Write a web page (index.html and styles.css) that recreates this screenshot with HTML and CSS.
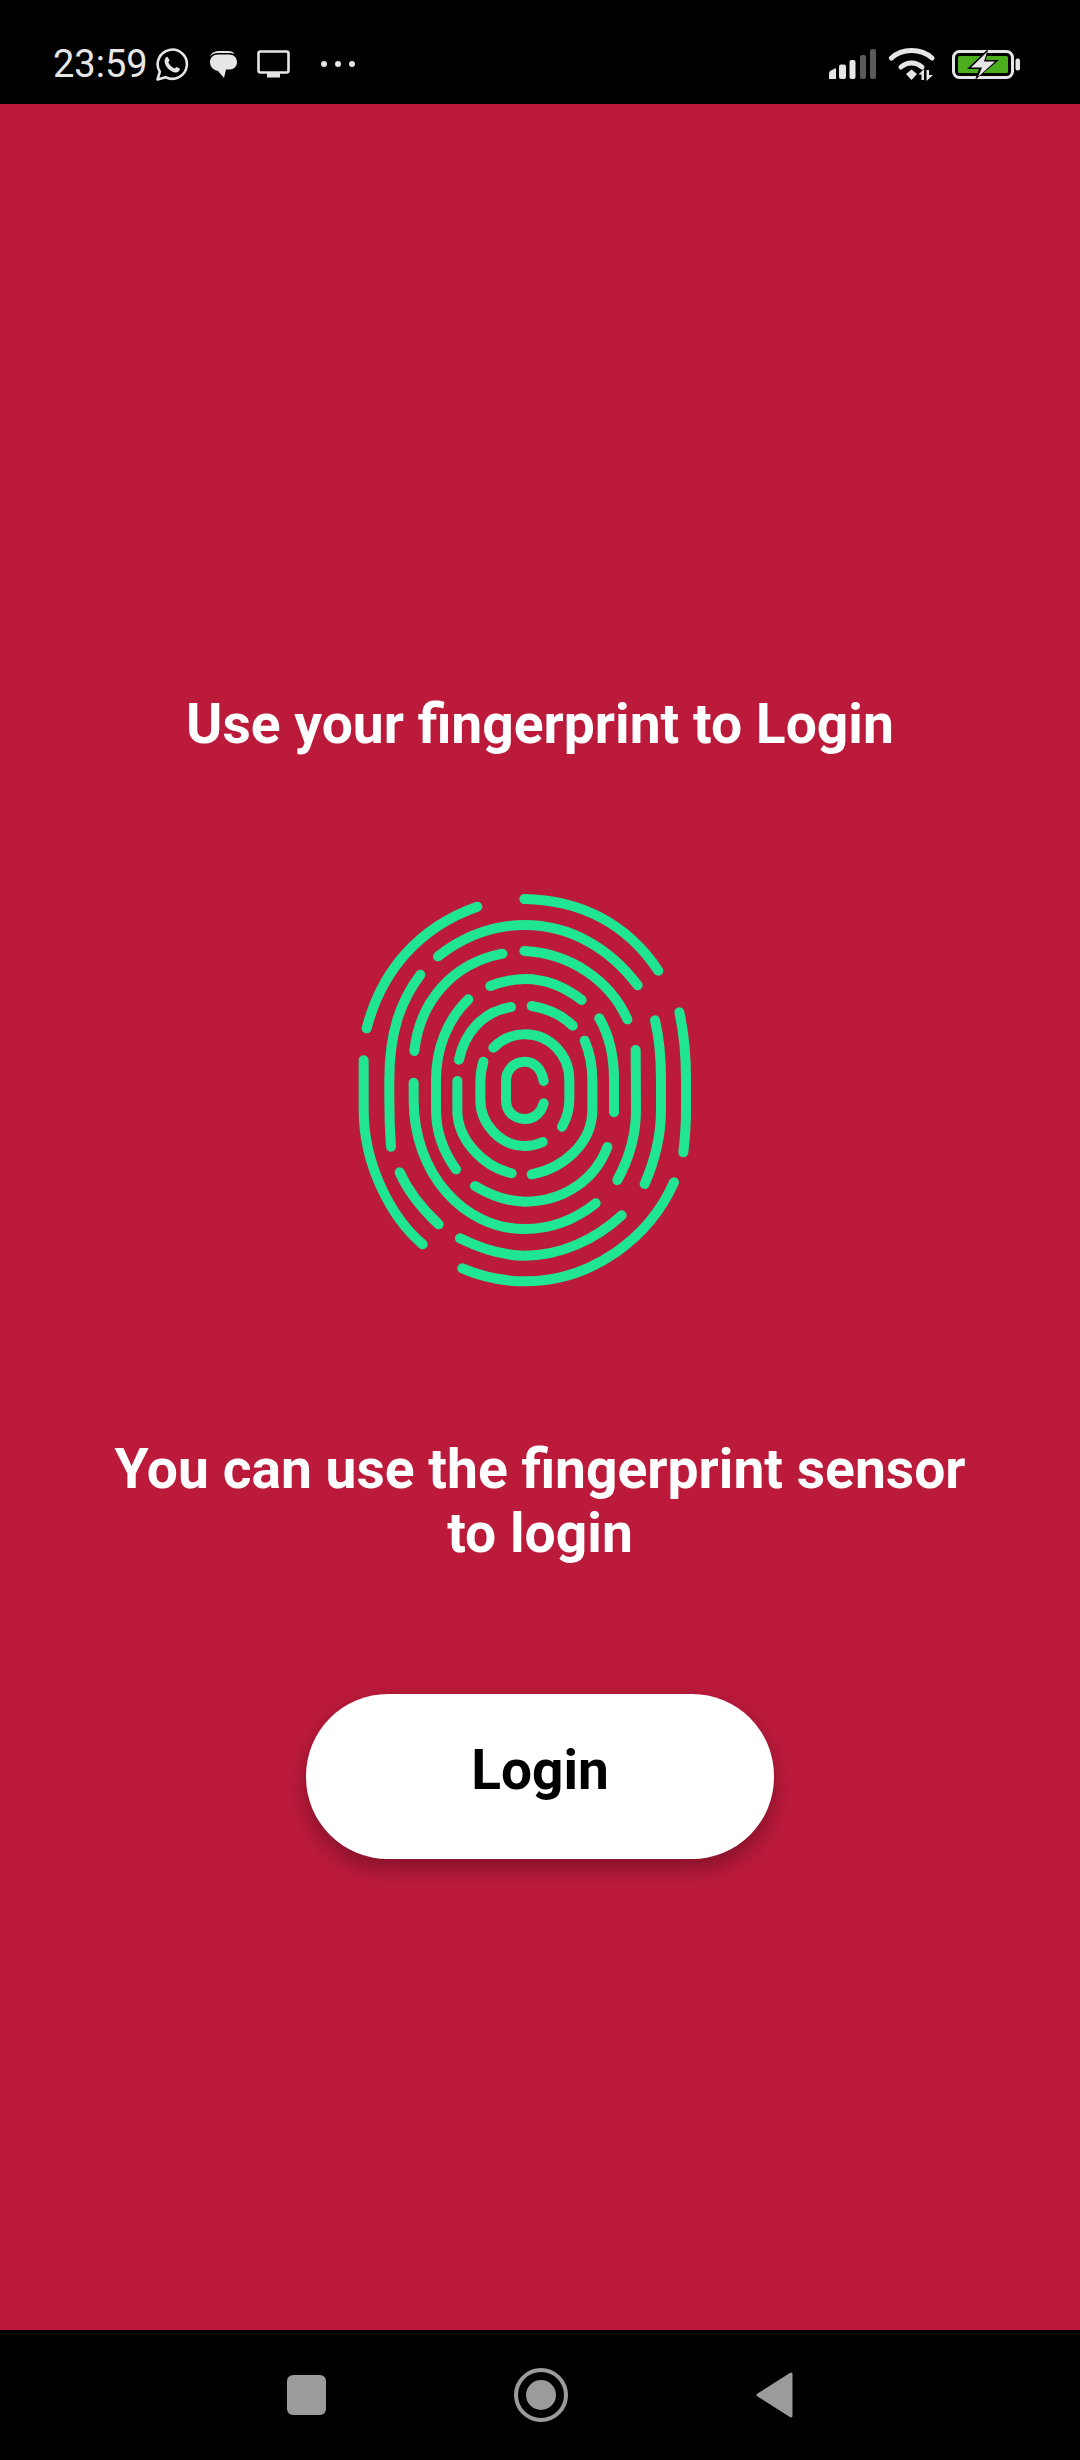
FILE: index.html
```html
<!DOCTYPE html>
<html lang="en">
<head>
    <meta charset="UTF-8">
    <meta name="viewport" content="width=device-width, initial-scale=1.0">
    <title>Login</title>
    <link rel="stylesheet" href="styles.css">
</head>
<body>

<div class="screen">
    <div class="status-bar">
        <div class="status-left">
            <span class="time">23:59</span>
            <svg class="icon-whatsapp" width="33" height="33" viewBox="0 0 33 33">
                <path d="M1.5 31.5 L3.8 23.8 A14.6 14.6 0 1 1 9.6 29.2 Z" fill="none" stroke="#e6e6e6" stroke-width="2.6" stroke-linejoin="round"/>
                <path d="M11.5 8.8 L13.6 12.2 L12.3 14.2 C13.6 17 15.6 19 18.6 20.4 L20.6 18.9 L24 20.8 C23.6 23.6 21.4 24.8 19 24.4 C13.8 23.4 9.6 19.2 8.7 14 C8.3 11.2 9.4 9.2 11.5 8.8 Z" fill="#e6e6e6"/>
            </svg>
            <svg class="icon-message" width="28" height="28" viewBox="0 0 28 28">
                <path d="M1 7 C2 2.5 6 1 11 1 L19 1 C22.5 1 24.5 2 25.5 4 L22 3 L9 3 C5 3 2.5 4.5 1 7 Z" fill="#e6e6e6"/>
                <path d="M9 4.5 L20 4.5 C25 4.5 28 8 28 12 C28 16.5 25 19.5 20.5 19.5 L17 19.5 L15 28 L9 21 C4.5 20 1 17 1 12 C1 7.5 4.5 4.5 9 4.5 Z" fill="#e6e6e6"/>
            </svg>
            <svg class="icon-tv" width="33" height="28" viewBox="0 0 33 28">
                <rect x="1.5" y="1.5" width="30" height="21" rx="2" fill="none" stroke="#e6e6e6" stroke-width="2.6"/>
                <rect x="10" y="23" width="13" height="4.5" fill="#e6e6e6"/>
            </svg>
            <svg class="icon-dots" width="36" height="8" viewBox="0 0 36 8">
                <circle cx="4" cy="4" r="3" fill="#e6e6e6"/>
                <circle cx="18" cy="4" r="3" fill="#e6e6e6"/>
                <circle cx="32" cy="4" r="3" fill="#e6e6e6"/>
            </svg>
        </div>
        <div class="status-right">
            <svg class="icon-signal" width="47" height="30" viewBox="0 0 47 30">
                <path d="M0 30 V24.5 Q0 22.5 2 21.5 L7 19 V30 Z" fill="#e6e6e6"/>
                <rect x="10" y="15.5" width="7" height="14.5" rx="2" fill="#e6e6e6"/>
                <rect x="20.5" y="11" width="6" height="19" rx="2" fill="#e6e6e6"/>
                <rect x="31" y="6" width="6" height="24" rx="2" fill="#5a5a5a"/>
                <rect x="41" y="0" width="6" height="30" rx="2" fill="#5a5a5a"/>
            </svg>
            <svg class="icon-wifi" width="46" height="34" viewBox="0 0 46 34">
                <path d="M2.5 11 C13 1 32 1 43 11" fill="none" stroke="#e6e6e6" stroke-width="5" stroke-linecap="round"/>
                <path d="M12 20 C18 14.5 27 14.5 33 20" fill="none" stroke="#e6e6e6" stroke-width="5" stroke-linecap="round"/>
                <path d="M17 27 L22.5 22.5 L28 27 L22.5 33 Z" fill="#e6e6e6"/>
                <path d="M35 22 V33 H32.5 V27.5 H29.5 Z M37.5 23 H40 V28 H44 L37.5 34 Z" fill="#e6e6e6"/>
            </svg>
            <svg class="icon-battery" width="68" height="31" viewBox="0 0 68 31">
                <rect x="1.5" y="2.5" width="59" height="26" rx="6" fill="none" stroke="#e6e6e6" stroke-width="3"/>
                <rect x="6" y="7" width="50" height="17" rx="1.5" fill="#4cae1e"/>
                <path d="M36 0 L15 20 H27 L23 31 L47 11 H34 Z" fill="#000"/>
                <path d="M35 3 L19 18.5 H30 L26 28 L43 12.5 H32 Z" fill="#e6e6e6"/>
                <rect x="63.5" y="9.5" width="4.5" height="12" rx="2" fill="#e6e6e6"/>
            </svg>
        </div>
    </div>

    <div class="content">
        <h2 class="title">Use your fingerprint to Login</h2>

        <svg class="fingerprint" width="370" height="420" viewBox="0 0 1110 1260">
            <g fill="none" stroke="#20e693" stroke-width="30" stroke-linecap="round">
                <path d="M80 445 C125 270 240 140 412 80"/>
                <path d="M553 57 C720 60 860 130 955 272"/>
                <path d="M294 229 C370 170 460 135 555 135 C690 135 810 205 893 316"/>
                <path d="M241 284 C180 365 148 460 148 600 L148 660 C148 710 150 760 153 800"/>
                <path d="M487 221 C340 250 240 360 223 513"/>
                <path d="M553 213 C690 220 810 300 862 418"/>
                <path d="M451 318 C485 305 520 297 555 297 C620 297 680 325 725 360"/>
                <path d="M385 358 C320 420 288 510 288 600 L288 690 C288 750 310 815 348 868"/>
                <path d="M513 381 C430 395 375 455 357 539"/>
                <path d="M575 378 C620 385 665 405 698 437"/>
                <path d="M778 415 C810 470 822 530 822 600 L822 697"/>
                <path d="M460 503 C485 478 520 463 555 463 C630 463 688 525 688 600 L688 660 C688 690 680 715 666 740"/>
                <path d="M611 603 C605 570 585 545 555 545 C522 545 498 570 498 603 L498 660 C498 695 522 717 555 717 C585 717 605 695 611 670"/>
                <path d="M430 545 C424 565 421 585 421 610 L421 660 C421 730 480 798 555 798 C575 798 592 793 608 786"/>
                <path d="M352 603 L352 690 C352 780 430 860 515 880"/>
                <path d="M734 482 C750 520 757 560 757 600 L757 690 C757 790 670 865 575 883"/>
                <path d="M887 510 L888 690 C888 770 865 840 832 900"/>
                <path d="M945 421 C957 470 963 530 963 600 L963 690 C963 770 945 840 914 912"/>
                <path d="M1018 397 C1030 450 1038 530 1038 600 L1038 690 C1038 730 1035 775 1030 817"/>
                <path d="M71 541 L71 690 C71 850 150 1010 248 1093"/>
                <path d="M221 608 L221 660 C221 880 370 1047 555 1047 C640 1047 710 1015 767 970"/>
                <path d="M179 877 C205 935 245 985 296 1033"/>
                <path d="M405 918 C450 945 500 965 555 965 C670 965 765 900 802 801"/>
                <path d="M360 1075 C420 1105 490 1127 555 1127 C660 1127 765 1080 845 1006"/>
                <path d="M367 1165 C425 1190 490 1204 555 1204 C760 1204 930 1070 1002 907"/>
            </g>
        </svg>

        <p class="subtitle">You can use the fingerprint sensor to login</p>

        <button class="login-btn" type="button">Login</button>
    </div>

    <div class="nav-bar">
        <svg width="39" height="40" viewBox="0 0 39 40">
            <rect width="39" height="40" rx="6" fill="#9b9b9b"/>
        </svg>
        <svg width="54" height="54" viewBox="0 0 54 54">
            <circle cx="27" cy="27" r="25" fill="none" stroke="#9b9b9b" stroke-width="4"/>
            <circle cx="27" cy="27" r="15" fill="#9b9b9b"/>
        </svg>
        <svg width="37" height="46" viewBox="0 0 37 46">
            <path d="M35 2 L2 23 L35 44 Z" fill="#9b9b9b" stroke="#9b9b9b" stroke-width="3" stroke-linejoin="round"/>
        </svg>
    </div>
</div>

</body>
</html>
```

FILE: styles.css
```css
body {
    margin: 0;
    font-family: Roboto, sans-serif;
    background-color: #000;
}
.screen {
    display: flex;
    flex-direction: column;
    width: 1080px;
    height: 2460px;
}
.status-bar {
    height: 80px;
    padding: 24px 60px 0 53px;
    display: flex;
    justify-content: space-between;
    align-items: center;
    background-color: #000;
    color: #e6e6e6;
}
.status-left,
.status-right {
    display: flex;
    align-items: center;
}
.time {
    font-size: 38px;
    line-height: 44px;
}
.icon-whatsapp {
    margin-left: 8px;
}
.icon-message,
.icon-tv {
    margin-left: 20px;
}
.icon-dots {
    margin-left: 30px;
}
.icon-wifi {
    margin-left: 13px;
}
.icon-battery {
    margin-left: 17px;
}
.content {
    flex: 1;
    display: flex;
    flex-direction: column;
    align-items: center;
    padding-top: 582px;
    background-color: #bc1a3b;
    color: white;
    text-align: center;
}
.title {
    margin: 0;
    font-size: 55.2px;
    font-weight: 700;
    line-height: 76px;
}
.fingerprint {
    display: block;
    margin-top: 118px;
    margin-left: -30px;
}
.subtitle {
    margin: 137px 0 0 0;
    width: 900px;
    font-size: 55.2px;
    font-weight: 700;
    line-height: 64px;
}
.login-btn {
    margin-top: 129px;
    padding: 0 0 14px 0;
    width: 468px;
    height: 165px;
    border: none;
    border-radius: 82px;
    background-color: white;
    color: black;
    font-family: Roboto, sans-serif;
    font-size: 55px;
    font-weight: 700;
    box-shadow: 0 10px 22px rgba(0, 0, 0, 0.3);
}
.nav-bar {
    height: 130px;
    display: flex;
    align-items: center;
    background-color: #000;
    justify-content: center;
    gap: 188px;
}
```
